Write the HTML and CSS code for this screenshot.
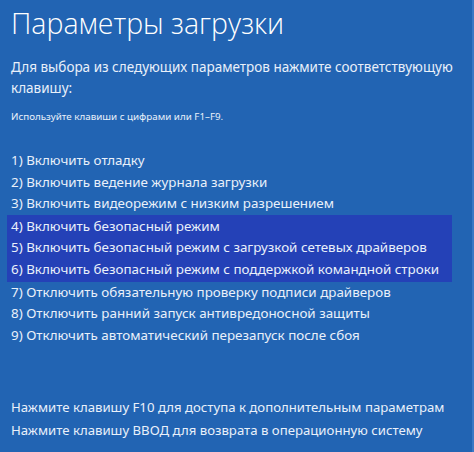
FILE: index.html
```html
<!DOCTYPE html>
<html lang="ru">
<head>
<meta charset="utf-8">
<link rel="stylesheet" href="styles.css">
</head>
<body>
<div class="screen">
  <h1 class="title">Параметры загрузки</h1>
  <p class="intro">Для выбора из следующих параметров нажмите соответствующую клавишу:</p>
  <p class="hint">Используйте клавиши с цифрами или F1–F9.</p>
  <ul class="options">
    <li class="opt">1) Включить отладку</li>
    <li class="opt">2) Включить ведение журнала загрузки</li>
    <li class="opt">3) Включить видеорежим с низким разрешением</li>
    <li class="group">
      <ul class="selected">
        <li class="opt">4) Включить безопасный режим</li>
        <li class="opt">5) Включить безопасный режим с загрузкой сетевых драйверов</li>
        <li class="opt">6) Включить безопасный режим с поддержкой командной строки</li>
      </ul>
    </li>
    <li class="opt">7) Отключить обязательную проверку подписи драйверов</li>
    <li class="opt">8) Отключить ранний запуск антивредоносной защиты</li>
    <li class="opt">9) Отключить автоматический перезапуск после сбоя</li>
  </ul>
  <div class="footer">
    <p class="foot">Нажмите клавишу F10 для доступа к дополнительным параметрам</p>
    <p class="foot">Нажмите клавишу ВВОД для возврата в операционную систему</p>
  </div>
</div>
</body>
</html>
```
FILE: styles.css
```css
html, body {
  margin: 0;
  padding: 0;
  background: #2264b3;
}
.screen {
  width: 474px;
  height: 452px;
  box-sizing: border-box;
  background: #2264b3;
  color: #e9f0fa;
  font-family: "Noto Sans", "Open Sans", sans-serif;
  padding: 3px 0 0 11px;
  display: flex;
  flex-direction: column;
  border-right: 2px solid #3a78c4;
}
.title {
  margin: 0;
  font-family: "Open Sans", "Noto Sans", sans-serif;
  font-weight: 300;
  font-size: 28.5px;
  line-height: 40px;
  color: #ffffff;
}
.intro {
  margin: 14px 0 0 0;
  font-size: 13.5px;
  line-height: 21px;
  width: 445px;
}
.hint {
  margin: 11px 0 0 0;
  font-size: 9.8px;
  line-height: 14px;
}
.options {
  list-style: none;
  margin: 26px 0 0 0;
  padding: 0;
}
.opt {
  font-size: 13.4px;
  line-height: 21.6px;
  white-space: nowrap;
}
.group {
  margin-left: -4px;
}
.selected {
  list-style: none;
  margin: 0;
  padding: 1px 0 1px 4px;
  width: 441px;
  background: #2441b7;
}
.footer {
  margin-top: 50px;
}
.foot {
  margin: 0;
  font-size: 13.2px;
  line-height: 23px;
  white-space: nowrap;
}
```
